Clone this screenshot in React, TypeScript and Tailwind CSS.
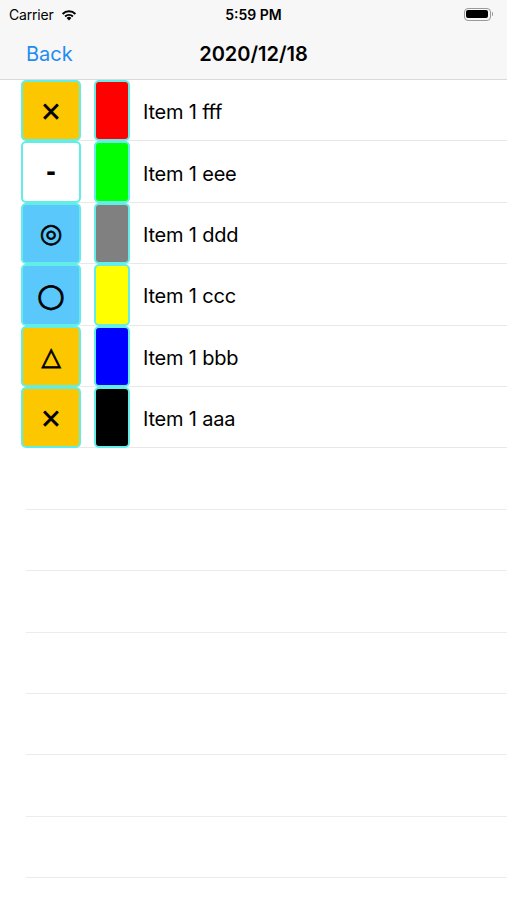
import React from "react";

type Row = { mark: string; markBg: string; markSize: string; swatch: string; label: string };

const rows: Row[] = [
  { mark: "×", markBg: "bg-[#fdc700]", markSize: "text-[26px] [-webkit-text-stroke:0.7px_#000]", swatch: "bg-[#ff0000]", label: "Item 1 fff" },
  { mark: "-", markBg: "bg-white", markSize: "text-[24px] font-bold", swatch: "bg-[#00ff00]", label: "Item 1 eee" },
  { mark: "◎", markBg: "bg-[#5ac8fa]", markSize: "text-[26px] [-webkit-text-stroke:0.6px_#000]", swatch: "bg-[#808080]", label: "Item 1 ddd" },
  { mark: "○", markBg: "bg-[#5ac8fa]", markSize: "text-[32px] [-webkit-text-stroke:0.8px_#000]", swatch: "bg-[#ffff00]", label: "Item 1 ccc" },
  { mark: "△", markBg: "bg-[#fdc700]", markSize: "text-[25px] [-webkit-text-stroke:0.8px_#000]", swatch: "bg-[#0000ff]", label: "Item 1 bbb" },
  { mark: "×", markBg: "bg-[#fdc700]", markSize: "text-[26px] [-webkit-text-stroke:0.7px_#000]", swatch: "bg-[#000000]", label: "Item 1 aaa" },
];

function Wifi() {
  return (
    <svg width="18" height="13" viewBox="0 0 18 13">
      <path d="M9 12.5 L6.6 10 A3.4 3.4 0 0 1 11.4 10 Z" fill="#000" />
      <path d="M4.4 7.8 A6.5 6.5 0 0 1 13.6 7.8 L12.2 9.2 A4.5 4.5 0 0 0 5.8 9.2 Z" fill="#000" />
      <path d="M1.9 5.3 A10 10 0 0 1 16.1 5.3 L14.7 6.7 A8 8 0 0 0 3.3 6.7 Z" fill="#000" />
    </svg>
  );
}

function Battery() {
  return (
    <div className="flex items-center">
      <div className="flex h-[13px] w-[27px] items-center rounded-[4px] border border-[#9a9a9a] p-[1.5px]">
        <div className="h-full w-full rounded-[2px] bg-black" />
      </div>
      <div className="ml-[1px] h-[4px] w-[1.5px] rounded-r-sm bg-[#9a9a9a]" />
    </div>
  );
}

export default function App() {
  return (
    <div className="min-h-[900px] bg-white font-['Inter',sans-serif] text-black">
      <div className="border-b border-[#d9d9d9] bg-[#f7f7f7]">
        <div className="relative flex h-[28px] items-center px-[9px]">
          <span className="text-[14px] tracking-[-0.2px]">Carrier</span>
          <span className="ml-[6px]">
            <Wifi />
          </span>
          <span className="absolute left-1/2 -translate-x-1/2 text-[14px] font-semibold">5:59 PM</span>
          <span className="ml-auto mr-[5px]">
            <Battery />
          </span>
        </div>
        <div className="relative flex h-[51px] items-center px-[26px]">
          <span className="text-[20px] text-[#1e8cf2]">Back</span>
          <span className="absolute left-1/2 -translate-x-1/2 text-[20px] font-semibold">2020/12/18</span>
        </div>
      </div>

      <div>
        {rows.map((r, i) => (
          <div key={i} className="relative flex h-[61.4px] items-stretch">
            <div className="absolute bottom-0 left-[26px] right-0 h-px bg-[#e8e8e8]" />
            <div
              className={`relative ml-[21px] flex w-[60px] items-center justify-center rounded-[5px] border-2 border-[#62eee6] ${r.markBg}`}
            >
              <span className={`font-['DejaVu_Sans',sans-serif] leading-none ${r.markSize}`}>{r.mark}</span>
            </div>
            <div className={`relative ml-[13px] w-[36px] rounded-[5px] border-2 border-[#62eee6] ${r.swatch}`} />
            <div className="ml-[13px] flex items-center pt-[3px] text-[20px] tracking-[-0.2px]">{r.label}</div>
          </div>
        ))}
        {Array.from({ length: 7 }).map((_, i) => (
          <div key={i} className="ml-[26px] h-[61.4px] border-b border-[#ececec]" />
        ))}
      </div>
    </div>
  );
}
